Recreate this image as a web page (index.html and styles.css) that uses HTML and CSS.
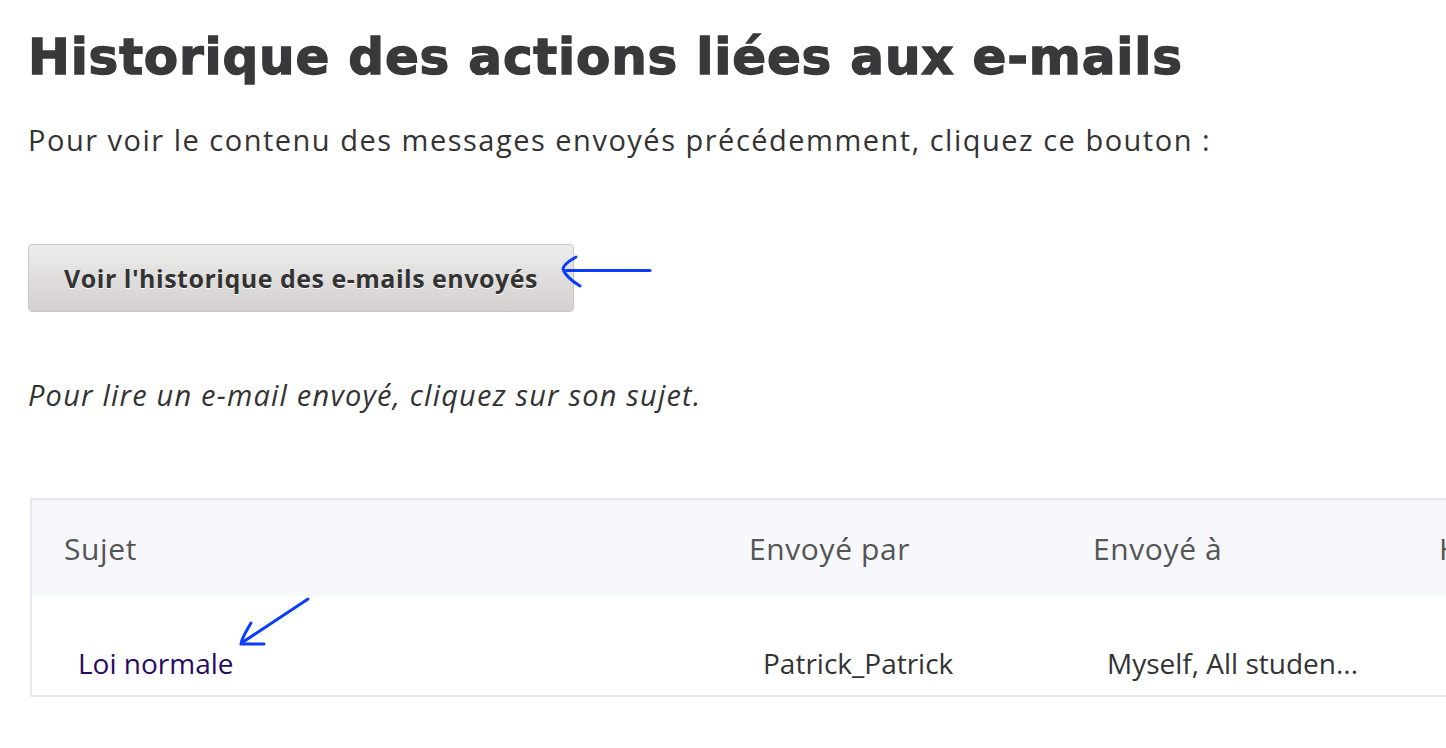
FILE: index.html
```html
<!DOCTYPE html>
<html lang="fr">
<head>
<meta charset="utf-8">
<title>Historique des actions liées aux e-mails</title>
<link rel="stylesheet" href="styles.css">
</head>
<body>
<div class="page">
  <h1 class="title">Historique des actions liées aux e-mails</h1>
  <p class="intro">Pour voir le contenu des messages envoyés précédemment, cliquez ce bouton :</p>
  <div class="btn-row"><button class="btn">Voir l'historique des e-mails envoyés</button></div>
  <p class="hint">Pour lire un e-mail envoyé, cliquez sur son sujet.</p>
  <div class="table-wrap">
    <table class="mail-table">
      <thead>
        <tr>
          <th class="c1">Sujet</th>
          <th class="c2">Envoyé par</th>
          <th class="c3">Envoyé à</th>
          <th class="c4">Heure</th>
        </tr>
      </thead>
      <tbody>
        <tr>
          <td><a class="subject" href="#">Loi normale</a></td>
          <td>Patrick_Patrick</td>
          <td>Myself, All studen...</td>
          <td></td>
        </tr>
      </tbody>
    </table>
  </div>
  <svg class="arrows" width="1446" height="748" viewBox="0 0 1446 748" aria-hidden="true">
    <g fill="none" stroke="#0a3cff" stroke-width="3" stroke-linecap="round" stroke-linejoin="round">
      <path d="M566 270.5 L650 270.5"/>
      <path d="M576 257 C569 261 563 265 563 269 C565 276 572 281 580 286"/>
      <path d="M308 599 L243 642"/>
      <path d="M251 623 C247 630 242 637 241 644 C248 644 256 644 264 644"/>
    </g>
  </svg>
</div>
</body>
</html>
```

FILE: styles.css
```css
html, body {
  margin: 0;
  padding: 0;
  background: #ffffff;
  overflow: hidden;
}
.page {
  position: relative;
  width: 1446px;
  height: 748px;
  overflow: hidden;
  padding-left: 28px;
  box-sizing: border-box;
  font-family: "Open Sans", "Liberation Sans", sans-serif;
  color: #333333;
}
.title {
  margin: 0;
  padding-top: 24px;
  font-family: "DejaVu Sans", "Liberation Sans", sans-serif;
  font-weight: 800;
  font-size: 50px;
  line-height: 66px;
  color: #39393b;
  -webkit-text-stroke: 1.4px #39393b;
  letter-spacing: 0.8px;
  white-space: nowrap;
}
.intro {
  margin: 31px 0 0 0;
  font-size: 29px;
  letter-spacing: 1.5px;
  line-height: 38px;
  white-space: nowrap;
}
.btn-row {
  margin-top: 85px;
  display: flex;
}
.btn {
  height: 68px;
  width: 546px;
  border: 1px solid #c9c6c6;
  border-radius: 4px;
  background: linear-gradient(#edebeb, #d4d0d0);
  font-family: "Open Sans", "Liberation Sans", sans-serif;
  font-weight: 700;
  font-size: 25px;
  letter-spacing: 0.5px;
  color: #333333;
  text-shadow: 0 1px 0 #ffffff;
  padding: 0;
  white-space: nowrap;
}
.hint {
  margin: 64px 0 0 0;
  font-style: italic;
  font-size: 29px;
  letter-spacing: 1.2px;
  line-height: 38px;
  white-space: nowrap;
}
.table-wrap {
  margin-top: 84px;
  margin-left: 2px;
  width: 1500px;
}
.mail-table {
  border-collapse: collapse;
  border: 2px solid #e7e8ed;
  width: 1500px;
  table-layout: fixed;
  font-size: 28px;
}
.mail-table th {
  box-sizing: border-box;
  background: #f7f8fc;
  height: 97px;
  padding: 0 0 0 32px;
  text-align: left;
  font-weight: 400;
  font-size: 30px;
  letter-spacing: 0.6px;
  color: #555555;
  vertical-align: middle;
  white-space: nowrap;
}
.mail-table td {
  height: 100px;
  padding: 34px 0 0 46px;
  box-sizing: border-box;
  color: #333333;
  vertical-align: middle;
  white-space: nowrap;
}
.c1 { width: 686px; }
.c2 { width: 344px; }
.c3 { width: 346px; }
.c4 { width: 124px; }
.subject {
  color: #2a0b62;
  text-decoration: none;
}
.arrows {
  position: absolute;
  left: 0;
  top: 0;
  pointer-events: none;
}
```
